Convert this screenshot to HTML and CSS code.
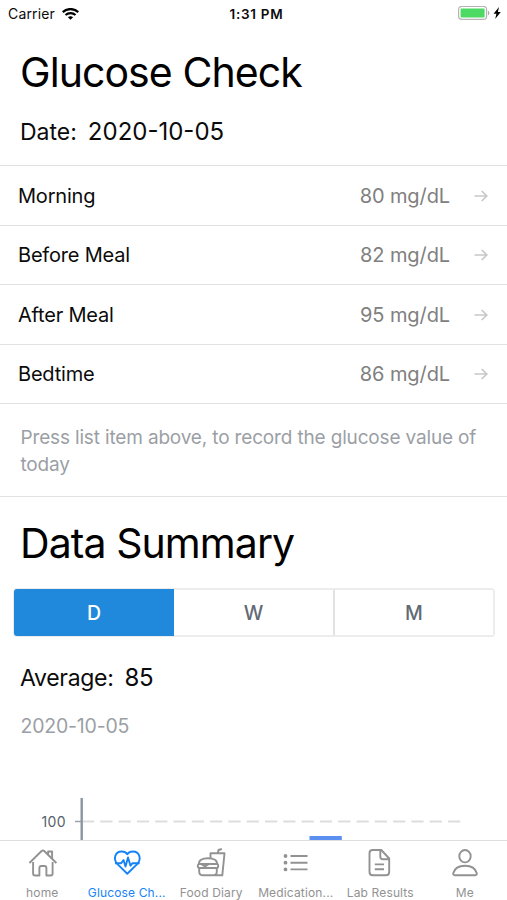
FILE: index.html
```html
<!DOCTYPE html>
<html lang="en">
<head>
  <meta charset="UTF-8" />
  <meta name="viewport" content="width=device-width, initial-scale=1.0"/>
  <title>Glucose Check</title>
  <link rel="stylesheet" href="styles.css">
</head>
<body>
  <header class="status-bar">
    <div class="carrier">
      <span>Carrier</span>
      <svg width="17" height="12" viewBox="0 0 17 12" fill="none" stroke="#000" stroke-width="2.2">
        <path d="M.7 4.1C5 0 12 0 16.3 4.1"/>
        <path d="M3.5 7C6.3 4.4 10.7 4.4 13.5 7"/>
        <path d="M8.5 11.8L5.9 9.2C7.4 7.9 9.6 7.9 11.1 9.2Z" fill="#000" stroke="none"/>
      </svg>
    </div>
    <div class="clock">1:31 PM</div>
    <div class="battery">
      <svg width="44" height="15" viewBox="0 0 44 15">
        <rect x=".6" y=".4" width="28" height="13" rx="3.2" fill="#fff" stroke="#b4b4b4" stroke-width="1.2"/>
        <rect x="2.6" y="2.4" width="24" height="9" rx="1" fill="#4cd964"/>
        <path d="M30 4.7C31.8 5.3 31.8 8.7 30 9.3Z" fill="#aaa"/>
        <path d="M41 .9L35.600 7.800H38.400L37.200 13.100L42.800 6H39.900Z" fill="#000"/>
      </svg>
    </div>
  </header>

  <main class="content">
    <h1>Glucose Check</h1>
    <p class="date"><span>Date:</span><span class="number">2020-10-05</span></p>

    <ul class="readings">
      <li><span>Morning</span><span class="value">80 mg/dL</span>
        <svg class="arrow" viewBox="0 0 14 12"><path d="M.5 6H12.7M7.7 1L12.8 6L7.7 11"/></svg></li>
      <li><span>Before Meal</span><span class="value">82 mg/dL</span>
        <svg class="arrow" viewBox="0 0 14 12"><path d="M.5 6H12.7M7.7 1L12.8 6L7.7 11"/></svg></li>
      <li><span>After Meal</span><span class="value">95 mg/dL</span>
        <svg class="arrow" viewBox="0 0 14 12"><path d="M.5 6H12.7M7.7 1L12.8 6L7.7 11"/></svg></li>
      <li><span>Bedtime</span><span class="value">86 mg/dL</span>
        <svg class="arrow" viewBox="0 0 14 12"><path d="M.5 6H12.7M7.7 1L12.8 6L7.7 11"/></svg></li>
    </ul>

    <p class="hint">Press list item above, to record the glucose value of today</p>

    <h2>Data Summary</h2>
    <div class="segments">
      <button class="active">D</button>
      <button>W</button>
      <button>M</button>
    </div>

    <p class="average"><span>Average:</span><span class="number">85</span></p>
    <p class="day">2020-10-05</p>

    <svg class="chart" width="507" height="100" viewBox="0 0 507 100">
      <text x="41.5" y="38.5">100</text>
      <path d="M82 33.5H461" stroke="#ddd" stroke-width="2" stroke-dasharray="12.2 6.1"/>
      <path d="M75 33.5H82" stroke="#9aa5ae" stroke-width="1.5"/>
      <path d="M81.7 10V100" stroke="#8995a1" stroke-width="2.4"/>
      <rect x="309.5" y="48" width="32.3" height="52" fill="#5b8ff0"/>
    </svg>
  </main>

  <nav class="tab-bar">
    <a class="tab">
      <svg viewBox="0 0 32 32">
        <path d="M7.1 15V26.5Q7.1 28.5 9.1 28.5H13.4V21Q13.4 19 15.4 19H18.4Q20.4 19 20.4 21V28.5H24.600Q26.600 28.5 26.600 26.5V15"/>
        <path d="M3.4 16L15.600 4Q16.900 2.900 18.200 4L30.400 16"/>
        <path d="M22.100 7.500V4.500H26.100V11.500"/>
      </svg>
      <span>home</span>
    </a>
    <a class="tab active">
      <svg viewBox="0 0 32 32">
        <path d="M16.3 26.7L6.7 17.4C1.3 11.8 4.5 4.5 10.5 4.5C13.3 4.5 15.3 5.7 16.3 7.3C17.3 5.7 19.3 4.5 22.1 4.5C28.1 4.5 31.3 11.8 25.9 17.4Z"/>
        <path d="M4 16.2H10.2L12.5 13L14.5 19.5L17 10.5L19.5 18.7L21.5 16.2H28.6"/>
      </svg>
      <span>Glucose Ch...</span>
    </a>
    <a class="tab">
      <svg viewBox="0 0 32 32">
        <path d="M4 17C3.6 13.4 7 11.2 13 11.2C19 11.2 22.4 13.4 22 17Z"/>
        <path d="M4 17Q2.8 17.2 2.8 19T4.6 21H21.7Q23.2 21 23.2 19T22 17M6.5 17.2L10 19.5L13.5 17.2"/>
        <path d="M4.2 21V24.5Q4.2 28.3 8 28.3H18Q21.8 28.3 21.8 24.5V21"/>
        <path d="M15.5 11V6.3H29.5L27.3 28.3H19.5M22.8 6.3L23.5 3L26.8 2"/>
      </svg>
      <span>Food Diary</span>
    </a>
    <a class="tab">
      <svg viewBox="0 0 32 32">
        <path d="M10.5 9H27.5M10.5 15.7H27.5M10.5 22.4H27.5"/>
        <path class="dots" d="M5.5 9H5.51M5.5 15.7H5.51M5.5 22.4H5.51"/>
      </svg>
      <span>Medication...</span>
    </a>
    <a class="tab">
      <svg viewBox="0 0 32 32">
        <path d="M17.3 3H8.7Q5.5 3 5.5 6.2V25Q5.5 28.3 8.7 28.3H22Q25.2 28.3 25.2 25V11.5ZM16.3 3.3V9.5Q16.3 12.3 19 12.3H25"/>
        <path d="M10.8 17.4H20M10.8 22.3H20"/>
      </svg>
      <span>Lab Results</span>
    </a>
    <a class="tab">
      <svg viewBox="0 0 32 32">
        <ellipse cx="16" cy="9.2" rx="5.7" ry="6.2"/>
        <path d="M5.8 28.2C4.3 28.2 4 27.2 4.3 26C5.5 21.5 10 18.7 16 18.7C22 18.7 26.5 21.5 27.7 26C28 27.2 27.7 28.2 26.2 28.2Z"/>
      </svg>
      <span>Me</span>
    </a>
  </nav>
</body>
</html>
```
FILE: styles.css
```css
* {
  box-sizing: border-box;
}
body {
  margin: 0;
  height: 900px;
  display: flex;
  flex-direction: column;
  overflow: hidden;
  background: #fff;
  color: #0b0b0b;
  font-family: Inter, 'Liberation Sans', sans-serif;
}
h1, h2, p, ul {
  margin: 0;
  padding: 0;
}
h1, h2 {
  padding-left: 20px;
  font-size: 41px;
  font-weight: 400;
  line-height: 50px;
  letter-spacing: -0.93px;
  color: #000;
}
.status-bar {
  flex: none;
  height: 27px;
  display: grid;
  grid-template-columns: 1fr auto 1fr;
  align-items: center;
  padding: 0 5px 0 8px;
  font-size: 14px;
}
.carrier {
  display: flex;
  align-items: center;
  gap: 7px;
  letter-spacing: 0.15px;
}
.clock {
  padding-left: 3px;
  font-weight: 600;
  letter-spacing: 0.7px;
  font-size: 13.5px;
}
.battery {
  display: flex;
  justify-content: flex-end;
}
.content {
  flex: 1;
  min-height: 0;
  overflow: hidden;
}
h1 {
  margin-top: 20px;
}
.date, .average {
  display: flex;
  gap: 11px;
  padding-left: 20px;
  font-size: 23px;
  line-height: 30px;
}
.date {
  margin: 20px 0 18px;
}
.number {
  font-size: 24px;
}
.readings {
  list-style: none;
  border-top: 1px solid #e2e2e2;
}
.readings li {
  display: flex;
  align-items: center;
  height: 59.5px;
  padding: 1px 19px 0 18px;
  border-bottom: 1px solid #e2e2e2;
  font-size: 20px;
  letter-spacing: -0.2px;
}
.value {
  margin-left: auto;
  color: #808080;
  letter-spacing: -0.1px;
}
.arrow {
  width: 14px;
  height: 12px;
  margin-left: 24px;
  fill: none;
  stroke: #c8c8c8;
  stroke-width: 1.7;
}
.hint {
  height: 93px;
  padding: 20px 20px 0 20.5px;
  border-bottom: 1px solid #e2e2e2;
  color: #9b9fa5;
  font-size: 19px;
  line-height: 27px;
  letter-spacing: -0.16px;
}
h2 {
  margin-top: 21px;
}
.segments {
  display: grid;
  grid-template-columns: 159px 159px 1fr;
  height: 49px;
  margin: 20px 12px 0 13px;
  border: 2px solid #ececec;
  border-radius: 4px;
}
.segments button {
  padding: 0;
  border: 0;
  border-left: 2px solid #e2e2e2;
  background: #fff;
  color: #626a75;
  font-family: inherit;
  font-size: 19.5px;
  font-weight: 500;
}
.segments .active {
  margin: -1px 0 -1px -1px;
  border: 0;
  border-radius: 3px 0 0 3px;
  background: #2089dc;
  color: #fff;
}
.segments .active + button {
  border-left: 0;
}
.average {
  margin-top: 26px;
  letter-spacing: -0.3px;
}
.day {
  margin-top: 20px;
  padding-left: 20.5px;
  color: #9b9fa5;
  font-size: 19.5px;
  line-height: 26px;
  letter-spacing: -0.2px;
}
.chart {
  display: block;
  margin-top: 49px;
}
.chart text {
  fill: #57626c;
  font-size: 14px;
  letter-spacing: 0.3px;
}
.tab-bar {
  flex: none;
  height: 60px;
  display: grid;
  grid-template-columns: repeat(6, 1fr);
  padding-top: 6px;
  border-top: 1px solid #dedede;
}
.tab {
  display: flex;
  flex-direction: column;
  align-items: center;
  color: #929292;
  font-size: 12px;
  line-height: 16px;
  letter-spacing: 0.15px;
  white-space: nowrap;
}
.tab svg {
  width: 32px;
  height: 32px;
  margin-bottom: 6px;
  fill: none;
  stroke: currentColor;
  stroke-width: 1.9;
  stroke-linejoin: round;
}
.tab .dots {
  stroke-width: 3.8;
  stroke-linecap: round;
}
.tab.active {
  color: #1583f7;
}
```
